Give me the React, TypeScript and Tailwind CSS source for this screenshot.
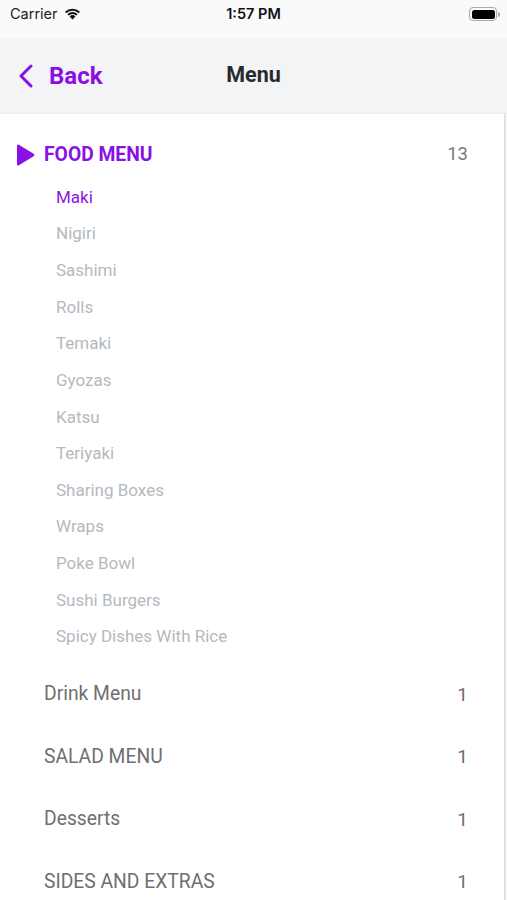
import React from 'react';

const subItems = [
  'Maki',
  'Nigiri',
  'Sashimi',
  'Rolls',
  'Temaki',
  'Gyozas',
  'Katsu',
  'Teriyaki',
  'Sharing Boxes',
  'Wraps',
  'Poke Bowl',
  'Sushi Burgers',
  'Spicy Dishes With Rice',
];

const categories = [
  { name: 'Drink Menu', count: 1 },
  { name: 'SALAD MENU', count: 1 },
  { name: 'Desserts', count: 1 },
  { name: 'SIDES AND EXTRAS', count: 1 },
];

const StatusBar: React.FC = () => (
  <div
    className="h-[38px] shrink-0 bg-[#fafafa] flex items-center justify-between pl-[10px] pr-[7px] pb-[10px] relative"
    style={{ fontFamily: 'Inter, "Liberation Sans", sans-serif' }}
  >
    <div className="flex items-center gap-[6px] text-[14.5px] text-[#222]">
      <span>Carrier</span>
      <svg width="17" height="12" viewBox="0 0 17 12">
        <path d="M8.5 11.5 L5.6 8.4 A4.2 4.2 0 0 1 11.4 8.4 Z" fill="#111" />
        <path d="M3.4 6.2 A7.3 7.3 0 0 1 13.6 6.2 L12.2 7.6 A5.3 5.3 0 0 0 4.8 7.6 Z" fill="#111" />
        <path d="M1 3.8 A10.8 10.8 0 0 1 16 3.8 L14.6 5.2 A8.8 8.8 0 0 0 2.4 5.2 Z" fill="#111" />
      </svg>
    </div>
    <span className="absolute left-1/2 -translate-x-1/2 text-[14.5px] font-semibold text-[#111]">1:57 PM</span>
    <div className="flex items-center">
      <div className="w-[28px] h-[14px] rounded-[4px] border border-[#a8a8a8] p-[1.5px]">
        <div className="w-full h-full rounded-[2.5px] bg-black" />
      </div>
      <div className="w-[2px] h-[5px] rounded-r-sm bg-[#a8a8a8] ml-[1px]" />
    </div>
  </div>
);

const NavBar: React.FC = () => (
  <div className="h-[76px] shrink-0 bg-[#f3f4f5] flex items-center relative border-b border-[#ececee]">
    <div className="flex items-center pl-[17px] gap-[14px]">
      <svg width="18" height="26" viewBox="0 0 18 26" fill="none">
        <path d="M14 3 L4 13 L14 23" stroke="#8a10e6" strokeWidth="3" strokeLinecap="round" strokeLinejoin="round" />
      </svg>
      <span className="text-[24px] font-bold text-[#8a10e6]">Back</span>
    </div>
    <span className="absolute left-1/2 -translate-x-1/2 text-[21.5px] font-bold text-[#2a2a2a]">Menu</span>
  </div>
);

export default function App() {
  return (
    <div
      className="w-[507px] h-[900px] overflow-hidden bg-white flex flex-col"
      style={{ fontFamily: 'Roboto, "Noto Sans", sans-serif' }}
    >
      <StatusBar />
      <NavBar />
      <div className="flex-1 shrink-0 border-r-2 border-[#dfe1e4] mr-[1px]">
        <div className="flex items-center justify-between pl-[16px] pr-[36px] h-[32px] mt-[25px]">
          <div className="flex items-center gap-[9px]">
            <svg width="19" height="24" viewBox="0 0 19 24">
              <path d="M2.5 1.5 Q1 1 1 3 L1 21 Q1 23 2.5 22.5 L18 13 Q19 12 18 11 Z" fill="#8a10e6" />
            </svg>
            <span className="text-[19.3px] font-bold text-[#8a10e6]">FOOD MENU</span>
          </div>
          <span className="text-[18.5px] text-[#7a7a7a]">13</span>
        </div>
        <div className="flex flex-col pl-[56px] mt-[8px]">
          {subItems.map((item, i) => (
            <div
              key={item}
              className={`h-[36.67px] flex items-center text-[17px] ${i === 0 ? 'text-[#8a16e0]' : 'text-[#b4b9bf]'}`}
            >
              {item}
            </div>
          ))}
        </div>
        <div className="flex flex-col mt-[8px]">
          {categories.map((c) => (
            <div key={c.name} className="h-[62.5px] flex items-center justify-between pl-[44px] pr-[36px]">
              <span className="text-[19.3px] text-[#6f6f6f]">{c.name}</span>
              <span className="text-[19px] text-[#6f6f6f]">{c.count}</span>
            </div>
          ))}
        </div>
      </div>
    </div>
  );
}
